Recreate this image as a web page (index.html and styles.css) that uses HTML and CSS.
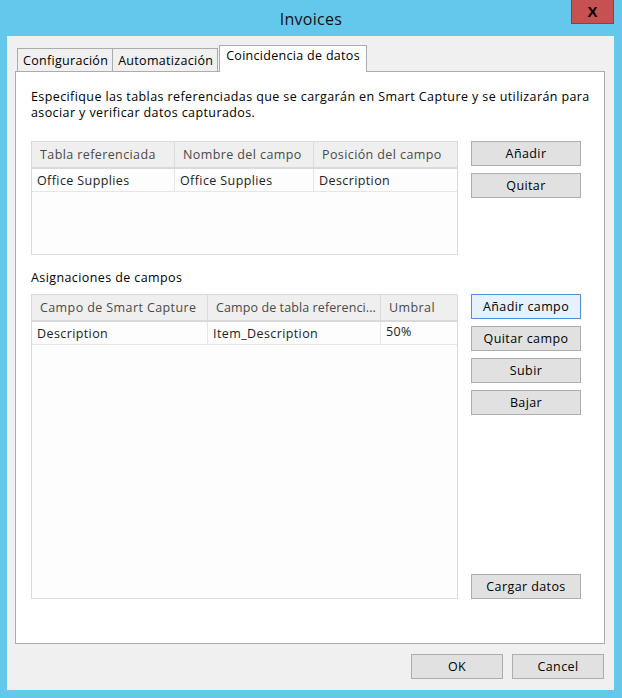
FILE: index.html
```html
<!DOCTYPE html>
<html lang="es">

<head>
    <meta charset="UTF-8">
    <meta name="viewport" content="width=device-width, initial-scale=1.0">
    <title>Invoices</title>
    <link rel="stylesheet" href="styles.css">
</head>

<body>
    <div class="window">
        <div class="titlebar">
            <span class="title">Invoices</span>
            <div class="close">X</div>
        </div>

        <div class="client">
            <div class="tabs">
                <div class="tab">Configuración</div>
                <div class="tab">Automatización</div>
                <div class="tab active">Coincidencia de datos</div>
            </div>

            <div class="panel">
                <p class="desc">Especifique las tablas referenciadas que se cargarán en Smart Capture y se utilizarán para<br>asociar y verificar datos capturados.</p>

                <div class="section">
                    <div class="grid grid-ref">
                        <div class="row head">
                            <div class="cell c1">Tabla referenciada</div>
                            <div class="cell c2">Nombre del campo</div>
                            <div class="cell c3">Posición del campo</div>
                        </div>
                        <div class="row">
                            <div class="cell c1">Office Supplies</div>
                            <div class="cell c2">Office Supplies</div>
                            <div class="cell c3">Description</div>
                        </div>
                    </div>
                    <div class="buttons">
                        <div class="btn">Añadir</div>
                        <div class="btn">Quitar</div>
                    </div>
                </div>

                <div class="label">Asignaciones de campos</div>

                <div class="section">
                    <div class="grid grid-map">
                        <div class="row head">
                            <div class="cell m1">Campo de Smart Capture</div>
                            <div class="cell m2">Campo de tabla referenci...</div>
                            <div class="cell m3">Umbral</div>
                        </div>
                        <div class="row">
                            <div class="cell m1">Description</div>
                            <div class="cell m2">Item_Description</div>
                            <div class="cell m3 top">50%</div>
                        </div>
                    </div>
                    <div class="buttons">
                        <div class="btn focus">Añadir campo</div>
                        <div class="btn">Quitar campo</div>
                        <div class="btn">Subir</div>
                        <div class="btn">Bajar</div>
                        <div class="spacer"></div>
                        <div class="btn">Cargar datos</div>
                    </div>
                </div>
            </div>

            <div class="footer">
                <div class="btn wide">OK</div>
                <div class="btn wide">Cancel</div>
            </div>
        </div>
    </div>
</body>

</html>
```

FILE: styles.css
```css
body {
    margin: 0;
    background-color: #63c8eb;
    font-family: "Open Sans", "Liberation Sans", sans-serif;
    font-size: 12.5px;
    letter-spacing: 0.4px;
    color: #000;
}

.window {
    width: 622px;
    height: 698px;
    position: relative;
}

.titlebar {
    height: 36px;
    display: flex;
    justify-content: center;
    align-items: center;
}

.title {
    font-size: 16px;
    letter-spacing: 0.3px;
    color: #111;
    margin-top: 1px;
}

.close {
    position: absolute;
    top: 0;
    left: 571px;
    width: 41px;
    height: 23px;
    background-color: #c75050;
    border: 1px solid #9c3a3a;
    border-top: 0;
    display: flex;
    justify-content: center;
    align-items: center;
    font-family: "Liberation Sans", sans-serif;
    font-size: 15px;
    font-weight: bold;
    letter-spacing: 0;
    color: #000;
}

.client {
    margin-left: 7px;
    width: 607px;
    height: 654px;
    background-color: #f0f0f0;
}

.tabs {
    height: 35px;
    padding-left: 10px;
    display: flex;
    align-items: flex-end;
}

.tab {
    height: 23px;
    padding: 1px 4px 0 5px;
    border: 1px solid #acacac;
    border-bottom: 0;
    box-sizing: border-box;
    background-color: #f0f0f0;
    display: flex;
    align-items: center;
    letter-spacing: 0.3px;
    color: #000;
}

.tab + .tab {
    border-left: 0;
}

.tab.active {
    height: 27px;
    margin-left: 1px;
    margin-bottom: -1px;
    padding: 1px 6px 0 6px;
    border-left: 1px solid #acacac;
    background-color: #fff;
    position: relative;
    z-index: 1;
    align-items: flex-start;
    line-height: 17px;
}

.panel {
    margin-left: 8px;
    height: 571px;
    border: 1px solid #acacac;
    background-color: #fff;
    padding: 0 0 0 15px;
    width: 573px;
}

.desc {
    margin: 17px 0 0 0;
    line-height: 16px;
    white-space: nowrap;
}

.section {
    display: flex;
    gap: 13px;
}

.panel > .section:nth-of-type(1) {
    margin-top: 20px;
}

.grid {
    width: 425px;
    border: 1px solid #dadada;
    background-color: #fdfdfd;
}

.grid-ref {
    height: 112px;
}

.grid-map {
    height: 303px;
}

.row {
    display: flex;
    height: 22px;
    border-bottom: 1px solid #e6e6e6;
}

.row.head {
    height: 25px;
    background-color: #efefef;
    border-bottom: 2px solid #d9d9d9;
}

.cell {
    display: flex;
    align-items: center;
    padding-left: 5px;
    border-right: 1px solid #e6e6e6;
    box-sizing: border-box;
    white-space: nowrap;
    overflow: hidden;
    color: #222;
}

.head .cell {
    padding-left: 8px;
    border-right: 1px solid #dcdcdc;
    color: #4a4a4a;
}

.head .m2 {
    letter-spacing: 0.1px;
}

.cell.top {
    align-items: flex-start;
    padding-top: 1px;
}

.c1 { width: 143px; }
.c2 { width: 139px; }
.c3 { width: 143px; border-right: 0; }

.m1 { width: 176px; }
.m2 { width: 173px; }
.m3 { width: 76px; border-right: 0; }

.head .c3,
.head .m3 {
    border-right: 0;
}

.buttons {
    width: 110px;
    display: flex;
    flex-direction: column;
    gap: 7px;
}

.btn {
    height: 23px;
    border: 1px solid #adadad;
    background-color: #e1e1e1;
    display: flex;
    justify-content: center;
    align-items: center;
    color: #000;
}

.btn.focus {
    border-color: #4f91d6;
    background-color: #e5f1fb;
}

.spacer {
    flex: 1;
}

.label {
    margin-top: 15px;
    height: 24px;
    line-height: 15px;
}

.footer {
    display: flex;
    justify-content: flex-end;
    gap: 9px;
    padding: 10px 10px 0 0;
}

.btn.wide {
    width: 90px;
}
```
